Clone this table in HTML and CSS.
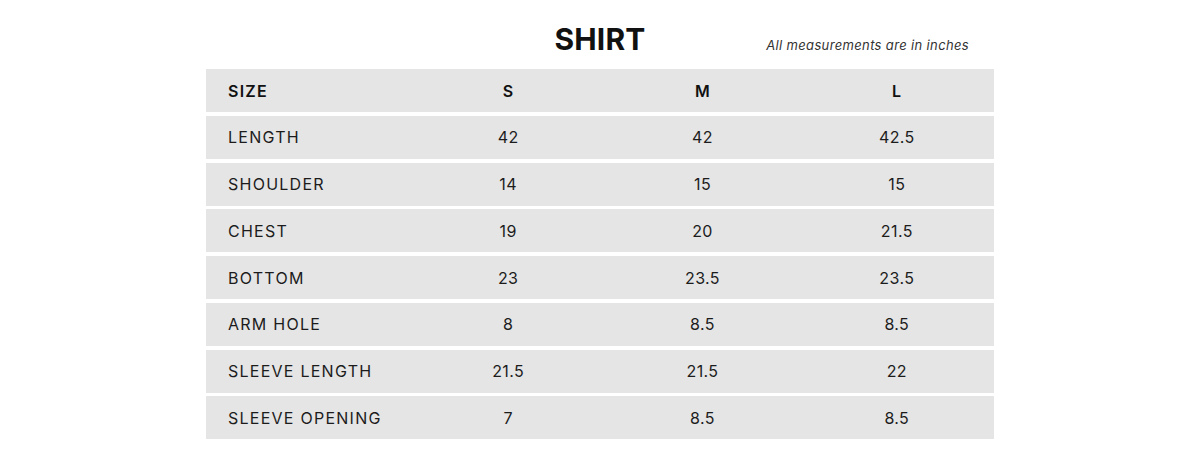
FILE: index.html
```html
<!DOCTYPE html>
<html lang="en">
<head>
<meta charset="utf-8">
<title>Shirt size chart</title>
<link rel="stylesheet" href="styles.css">
</head>
<body>
<main class="chart">
  <header class="chart-head">
    <span></span>
    <h1 class="chart-title">SHIRT</h1>
    <p class="chart-note">All measurements are in inches</p>
  </header>
  <div class="size-table">
    <div class="row row-head"><span class="cell label">SIZE</span><span class="cell">S</span><span class="cell">M</span><span class="cell">L</span></div>
    <div class="row"><span class="cell label">LENGTH</span><span class="cell">42</span><span class="cell">42</span><span class="cell">42.5</span></div>
    <div class="row"><span class="cell label">SHOULDER</span><span class="cell">14</span><span class="cell">15</span><span class="cell">15</span></div>
    <div class="row"><span class="cell label">CHEST</span><span class="cell">19</span><span class="cell">20</span><span class="cell">21.5</span></div>
    <div class="row"><span class="cell label">BOTTOM</span><span class="cell">23</span><span class="cell">23.5</span><span class="cell">23.5</span></div>
    <div class="row"><span class="cell label">ARM HOLE</span><span class="cell">8</span><span class="cell">8.5</span><span class="cell">8.5</span></div>
    <div class="row"><span class="cell label">SLEEVE LENGTH</span><span class="cell">21.5</span><span class="cell">21.5</span><span class="cell">22</span></div>
    <div class="row"><span class="cell label">SLEEVE OPENING</span><span class="cell">7</span><span class="cell">8.5</span><span class="cell">8.5</span></div>
  </div>
</main>
</body>
</html>
```

FILE: styles.css
```css
* { box-sizing: border-box; }

html, body {
  margin: 0;
  padding: 0;
  background: #ffffff;
}

body {
  font-family: Inter, "Liberation Sans", sans-serif;
  color: #1c1c1c;
}

.chart {
  width: 788px;
  margin: 0 auto;
  padding-top: 21px;
}

.chart-head {
  display: grid;
  grid-template-columns: 1fr auto 1fr;
  align-items: baseline;
  margin-bottom: 12px;
}

.chart-title {
  margin: 0;
  font-size: 30px;
  line-height: 36px;
  font-weight: 700;
  color: #111111;
  letter-spacing: 0.2px;
}

.chart-note {
  margin: 0;
  justify-self: end;
  padding-right: 25px;
  font-size: 13px;
  font-style: italic;
  letter-spacing: 0.35px;
  color: #333333;
}

.size-table {
  display: flex;
  flex-direction: column;
  gap: 3.75px;
}

.row {
  display: grid;
  grid-template-columns: 205px repeat(3, 1fr);
  height: 43px;
  align-items: center;
  background: #e5e5e5;
  font-size: 16px;
}

.row-head {
  font-weight: 600;
  color: #111111;
}

.cell {
  text-align: center;
  letter-spacing: 0.4px;
}

.cell.label {
  text-align: left;
  padding-left: 22px;
  letter-spacing: 1.25px;
}
```
